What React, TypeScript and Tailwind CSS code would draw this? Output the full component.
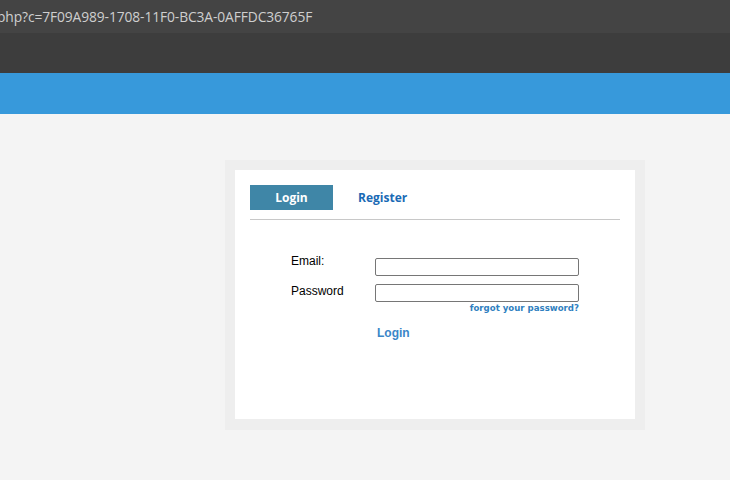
export default function App() {
  return (
    <div className="w-[730px] h-[480px] bg-[#f4f4f4] overflow-hidden">
      {/* browser address bar */}
      <div className="h-[33px] bg-[#444444] flex items-center">
        <span className="ml-[-3px] text-[13.8px] text-[#cfcfcf] font-['Open_Sans',sans-serif] leading-none tracking-[-0.1px] whitespace-nowrap">
          php?c=7F09A989-1708-11F0-BC3A-0AFFDC36765F
        </span>
      </div>
      <div className="h-[40px] bg-[#3d3d3d]" />
      <div className="h-[41px] bg-[#3799db]" />

      <div className="flex pt-[46px] pl-[225px]">
        <div className="w-[420px] h-[270px] bg-[#eeeeee] p-[10px]">
          <div className="w-[400px] h-[249px] bg-white px-[15px] pt-[15px]">
            {/* tabs */}
            <div className="flex items-center h-[25px]">
              <button className="w-[83px] h-[25px] bg-[#3f86a7] text-white text-[12px] font-bold font-['Open_Sans',sans-serif]">
                Login
              </button>
              <button className="ml-[25px] text-[#1a6ab5] text-[12px] font-bold font-['Open_Sans',sans-serif]">
                Register
              </button>
            </div>
            <div className="mt-[9px] h-[1px] bg-[#c8c8c8]" />

            {/* form */}
            <div className="pl-[41px] pt-[34px] font-['Liberation_Sans',Arial,sans-serif] text-[12px] leading-[14px]">
              <div className="flex">
                <label className="w-[84px] text-black">Email:</label>
                <input
                  type="text"
                  className="block mt-[4px] w-[204px] h-[18px] border border-[#767676] rounded-[2px] bg-white"
                />
              </div>
              <div className="flex mt-[8px]">
                <label className="w-[84px] text-black">Password</label>
                <input
                  type="password"
                  className="block w-[204px] h-[18px] border border-[#767676] rounded-[2px] bg-white"
                />
              </div>
              <div className="w-[288px] text-right text-[8.6px] leading-[12px]">
                <a className="font-bold text-[#2f7fc0] font-['DejaVu_Sans',Verdana,sans-serif]">
                  forgot your password?
                </a>
              </div>
              <div className="pl-[86px] mt-[12px] text-[12px] leading-[14px]">
                <a className="font-bold text-[#3a86c8]">Login</a>
              </div>
            </div>
          </div>
        </div>
      </div>
    </div>
  );
}
